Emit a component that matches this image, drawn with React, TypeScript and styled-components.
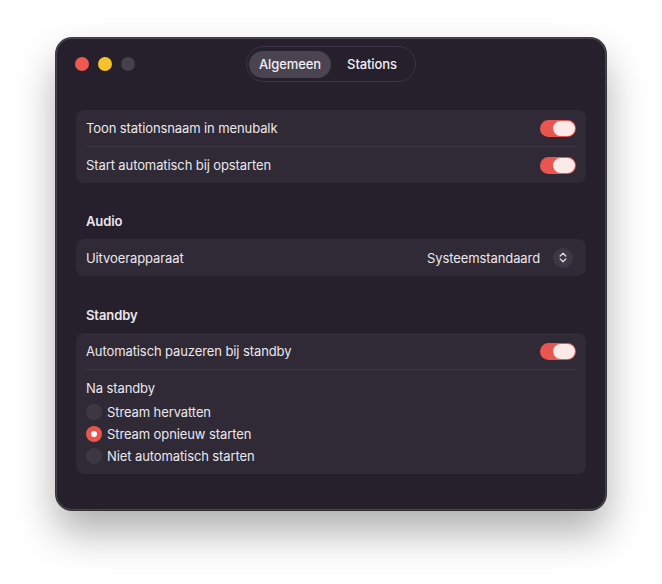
import { useState } from 'react';
import styled, { createGlobalStyle } from 'styled-components';

const GlobalStyle = createGlobalStyle`
  html, body {
    margin: 0;
    padding: 0;
    background: #ffffff;
  }
  body {
    font-family: Inter, "Noto Sans", "Liberation Sans", sans-serif;
    -webkit-font-smoothing: antialiased;
  }
`;

const S = {
  Page: styled.div`
    width: 662px;
    height: 584px;
    padding-top: 38px;
    box-sizing: border-box;
  `,

  Window: styled.div`
    width: 550px;
    margin: 0 auto;
    padding-bottom: 36px;
    border-radius: 16px;
    background-color: #25202b;
    box-shadow:
      0 0 0 1px rgba(0, 0, 0, 0.75),
      inset 0 0 0 1px rgba(255, 255, 255, 0.16),
      0 22px 40px rgba(0, 0, 0, 0.32);
    color: #ebe7ee;
    font-size: 13px;
    letter-spacing: -0.1px;
  `,

  TitleBar: styled.div`
    position: relative;
    display: flex;
    justify-content: center;
    align-items: center;
    height: 52px;
  `,

  Lights: styled.div`
    position: absolute;
    left: 19px;
    top: 19px;
    display: flex;
    gap: 9px;
  `,

  Light: styled.span<{ $color: string }>`
    width: 14px;
    height: 14px;
    border-radius: 50%;
    background-color: ${({ $color }) => $color};
  `,

  Segmented: styled.div`
    display: flex;
    align-items: center;
    height: 36px;
    padding: 0 2px;
    box-sizing: border-box;
    border: 1px solid #3d3446;
    border-radius: 18px;
  `,

  Segment: styled.button<{ $active?: boolean }>`
    width: 82px;
    height: 27px;
    padding: 0;
    border: none;
    border-radius: 14px;
    background-color: ${({ $active }) => ($active ? '#4a4350' : 'transparent')};
    color: #f1eef3;
    font-family: inherit;
    font-size: 13px;
    font-weight: 500;
    letter-spacing: -0.1px;
    cursor: pointer;
  `,

  Content: styled.div`
    padding: 20px 20px 0;
  `,

  SectionTitle: styled.h3<{ $top?: number }>`
    margin: 0;
    padding: ${({ $top }) => $top ?? 30}px 10px 10px;
    font-size: 13px;
    line-height: 16px;
    font-weight: 600;
  `,

  Card: styled.div`
    border-radius: 8px;
    background-color: #2f2a35;
  `,

  Row: styled.div<{ $height?: number }>`
    display: flex;
    justify-content: space-between;
    align-items: center;
    height: ${({ $height }) => $height ?? 36}px;
    padding: 0 10px;
  `,

  Divider: styled.div`
    height: 1px;
    margin: 0 10px;
    background-color: #3b3541;
  `,

  Toggle: styled.span<{ $on: boolean }>`
    display: flex;
    justify-content: ${({ $on }) => ($on ? 'flex-end' : 'flex-start')};
    align-items: center;
    width: 36px;
    height: 17px;
    padding: 1px;
    box-sizing: border-box;
    border-radius: 9px;
    background-color: ${({ $on }) => ($on ? '#e9554f' : '#4a4450')};
    cursor: pointer;
  `,

  Knob: styled.span`
    width: 22px;
    height: 15px;
    border-radius: 8px;
    background-color: #fde9e8;
  `,

  PopUp: styled.div`
    display: flex;
    align-items: center;
    gap: 13px;
    margin-right: 3px;
  `,

  Stepper: styled.span`
    display: flex;
    justify-content: center;
    align-items: center;
    width: 20px;
    height: 20px;
    border-radius: 50%;
    background-color: #3c3742;
  `,

  Group: styled.div`
    padding: 10px 10px 7px;
  `,

  GroupLabel: styled.div`
    line-height: 16px;
    margin-bottom: 5px;
  `,

  Radio: styled.label`
    display: flex;
    align-items: center;
    gap: 5px;
    height: 22px;
    cursor: pointer;
  `,

  RadioDot: styled.span<{ $checked: boolean }>`
    display: flex;
    justify-content: center;
    align-items: center;
    width: 16px;
    height: 16px;
    border-radius: 50%;
    background-color: ${({ $checked }) => ($checked ? '#e9554f' : '#3c3742')};

    &::after {
      content: '';
      display: ${({ $checked }) => ($checked ? 'block' : 'none')};
      width: 6px;
      height: 6px;
      border-radius: 50%;
      background-color: #ffffff;
    }
  `,
};

function Toggle({ on, onChange }: { on: boolean; onChange: () => void }) {
  return (
    <S.Toggle $on={on} onClick={onChange}>
      <S.Knob />
    </S.Toggle>
  );
}

const RESUME_OPTIONS = ['Stream hervatten', 'Stream opnieuw starten', 'Niet automatisch starten'];

export default function App() {
  const [showName, setShowName] = useState(true);
  const [autoStart, setAutoStart] = useState(true);
  const [autoPause, setAutoPause] = useState(true);
  const [resume, setResume] = useState(1);
  const [tab, setTab] = useState('general');

  return (
    <>
      <GlobalStyle />
      <S.Page>
        <S.Window>
          <S.TitleBar>
            <S.Lights>
              <S.Light $color="#ee5a52" />
              <S.Light $color="#f4c22b" />
              <S.Light $color="#47414d" />
            </S.Lights>
            <S.Segmented>
              <S.Segment $active={tab === 'general'} onClick={() => setTab('general')}>
                Algemeen
              </S.Segment>
              <S.Segment $active={tab === 'stations'} onClick={() => setTab('stations')}>
                Stations
              </S.Segment>
            </S.Segmented>
          </S.TitleBar>

          <S.Content>
            <S.Card>
              <S.Row>
                Toon stationsnaam in menubalk
                <Toggle on={showName} onChange={() => setShowName(!showName)} />
              </S.Row>
              <S.Divider />
              <S.Row>
                Start automatisch bij opstarten
                <Toggle on={autoStart} onChange={() => setAutoStart(!autoStart)} />
              </S.Row>
            </S.Card>

            <S.SectionTitle>Audio</S.SectionTitle>
            <S.Card>
              <S.Row $height={37}>
                Uitvoerapparaat
                <S.PopUp>
                  Systeemstandaard
                  <S.Stepper>
                    <svg width="8" height="11" viewBox="0 0 8 11" fill="none">
                      <path
                        d="M1.2 4L4 1.3L6.8 4M1.2 7L4 9.7L6.8 7"
                        stroke="#dcd7df"
                        strokeWidth="1.4"
                        strokeLinecap="round"
                        strokeLinejoin="round"
                      />
                    </svg>
                  </S.Stepper>
                </S.PopUp>
              </S.Row>
            </S.Card>

            <S.SectionTitle $top={31}>Standby</S.SectionTitle>
            <S.Card>
              <S.Row>
                Automatisch pauzeren bij standby
                <Toggle on={autoPause} onChange={() => setAutoPause(!autoPause)} />
              </S.Row>
              <S.Divider />
              <S.Group>
                <S.GroupLabel>Na standby</S.GroupLabel>
                {RESUME_OPTIONS.map((option, index) => (
                  <S.Radio key={option} onClick={() => setResume(index)}>
                    <S.RadioDot $checked={resume === index} />
                    {option}
                  </S.Radio>
                ))}
              </S.Group>
            </S.Card>
          </S.Content>
        </S.Window>
      </S.Page>
    </>
  );
}
